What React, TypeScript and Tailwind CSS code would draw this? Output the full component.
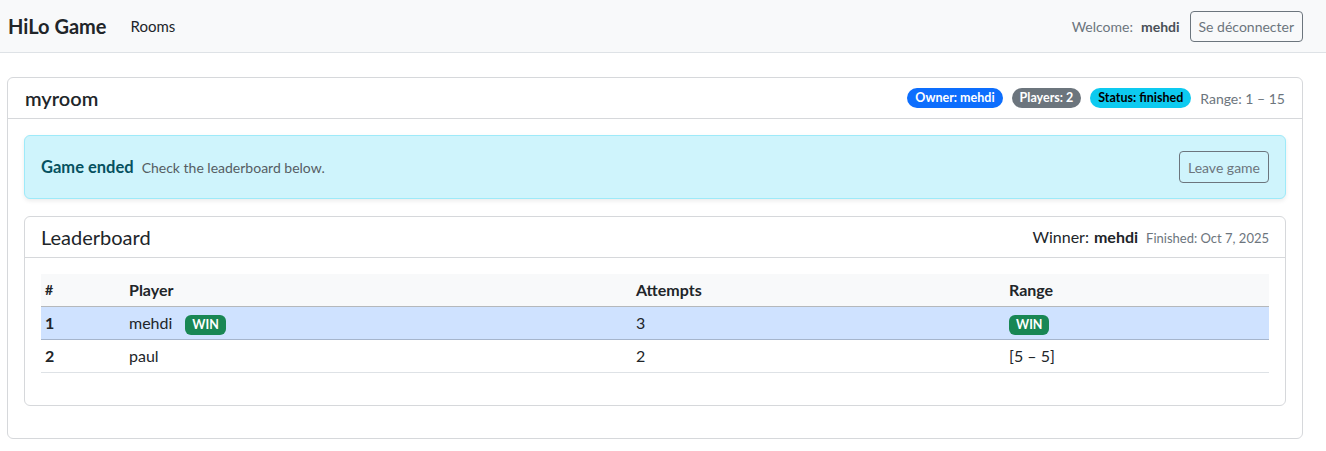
const rows = [
  { rank: 1, player: "mehdi", win: true, attempts: 3, range: null },
  { rank: 2, player: "paul", win: false, attempts: 2, range: "[5 – 5]" },
];

export default function App() {
  return (
    <div className="min-h-screen bg-white text-[#212529] font-['Lato',sans-serif] text-[16px]">
      {/* Navbar */}
      <nav className="h-[53px] bg-[#f8f9fa] border-b border-[#dee2e6] flex items-center pl-[8px] pr-[23px]">
        <span className="text-[20px] font-bold mr-[24px]">HiLo Game</span>
        <span className="text-[15px]">Rooms</span>
        <div className="ml-auto flex items-center">
          <span className="text-[14px] text-[#6c757d] mr-[8px]">Welcome:</span>
          <span className="text-[14px] font-bold text-[#495057] mr-[10px]">mehdi</span>
          <button className="h-[31px] px-[8px] text-[14px] text-[#6c757d] border border-[#6c757d] rounded-[4px]">
            Se déconnecter
          </button>
        </div>
      </nav>

      <main className="pl-[7px] pr-[23px] pt-[24px]">
        <section className="border border-[#d6d8db] rounded-[6px]">
          <header className="h-[41px] border-b border-[#d6d8db] flex items-center px-[17px]">
            <h5 className="text-[20px] font-semibold">myroom</h5>
            <div className="ml-auto flex items-center gap-[9px] text-[12.5px] font-bold">
              <span className="px-[8px] h-[20px] leading-[20px] rounded-full bg-[#0d6efd] text-white">Owner: mehdi</span>
              <span className="px-[8px] h-[20px] leading-[20px] rounded-full bg-[#6c757d] text-white">Players: 2</span>
              <span className="px-[8px] h-[20px] leading-[20px] rounded-full bg-[#0dcaf0] text-black">Status: finished</span>
              <span className="text-[14px] font-normal text-[#6c757d]">Range: 1 – 15</span>
            </div>
          </header>

          <div className="p-[16px]">
            <div className="h-[64px] bg-[#cff4fc] border border-[#9eeaf9] rounded-[6px] shadow-[0_2px_4px_rgba(0,0,0,0.08)] flex items-center px-[16px] mb-[17px]">
              <span className="text-[16.5px] font-bold text-[#055160] mr-[8px]">Game ended</span>
              <span className="text-[14px] text-[#555d63]">Check the leaderboard below.</span>
              <button className="ml-auto h-[32px] px-[8px] text-[14px] text-[#6c757d] border border-[#6c757d] rounded-[4px]">
                Leave game
              </button>
            </div>

            <div className="border border-[#d6d8db] rounded-[6px] mb-[16px]">
              <header className="h-[41px] border-b border-[#d6d8db] flex items-center px-[16px]">
                <h5 className="text-[20px]">Leaderboard</h5>
                <div className="ml-auto flex items-baseline">
                  <span className="mr-[5px]">Winner:</span>
                  <span className="font-bold mr-[8px]">mehdi</span>
                  <span className="text-[13px] text-[#6c757d]">Finished: Oct 7, 2025</span>
                </div>
              </header>
              <div className="p-[16px] pb-[32px]">
                <table className="w-full border-collapse table-fixed">
                  <thead>
                    <tr className="bg-[#f8f9fa] border-b border-[#b5b8bb] text-left font-bold">
                      <th className="h-[32px] px-[4px] w-[84px] text-[14px]">#</th>
                      <th className="px-[4px] w-[507px]">Player</th>
                      <th className="px-[4px] w-[373px]">Attempts</th>
                      <th className="px-[4px]">Range</th>
                    </tr>
                  </thead>
                  <tbody>
                    {rows.map((r) => (
                      <tr
                        key={r.rank}
                        className={r.win ? "bg-[#cfe2ff] border-b border-[#a6b5cc]" : "border-b border-[#dee2e6]"}
                      >
                        <td className="h-[33px] px-[4px] font-bold">{r.rank}</td>
                        <td className="px-[4px]">
                          {r.player}
                          {r.win && (
                            <span className="ml-[13px] inline-block px-[7px] h-[20px] leading-[20px] rounded-[6px] bg-[#198754] text-white text-[12.5px] font-bold">
                              WIN
                            </span>
                          )}
                        </td>
                        <td className="px-[4px]">{r.attempts}</td>
                        <td className="px-[4px]">
                          {r.win ? (
                            <span className="inline-block px-[7px] h-[20px] leading-[20px] rounded-[6px] bg-[#198754] text-white text-[12.5px] font-bold">
                              WIN
                            </span>
                          ) : (
                            r.range
                          )}
                        </td>
                      </tr>
                    ))}
                  </tbody>
                </table>
              </div>
            </div>
          </div>
        </section>
      </main>
    </div>
  );
}
